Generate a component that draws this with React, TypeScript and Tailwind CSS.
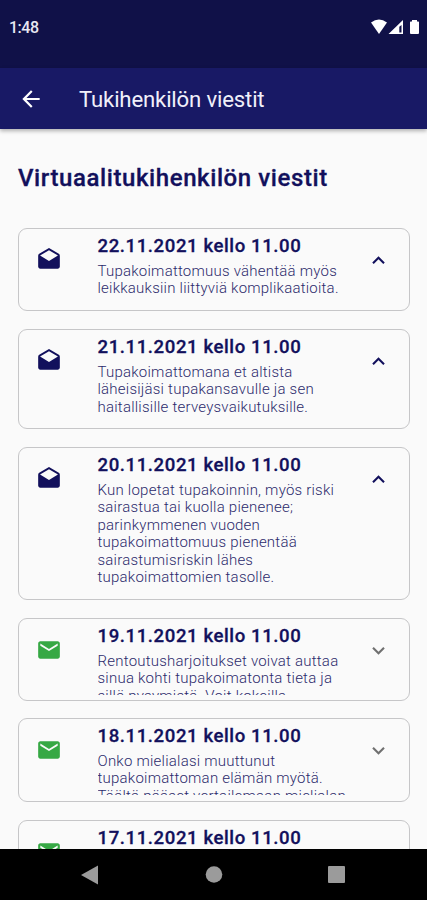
type Message = { date: string; lines: string[]; open: boolean; box: string };

const messages: Message[] = [
  {
    date: '22.11.2021 kello 11.00',
    lines: ['Tupakoimattomuus vähentää myös', 'leikkauksiin liittyviä komplikaatioita.'],
    open: true,
    box: 'h-[83px] mb-[18px]',
  },
  {
    date: '21.11.2021 kello 11.00',
    lines: ['Tupakoimattomana et altista', 'läheisijäsi tupakansavulle ja sen', 'haitallisille terveysvaikutuksille.'],
    open: true,
    box: 'h-[100px] mb-[18px]',
  },
  {
    date: '20.11.2021 kello 11.00',
    lines: [
      'Kun lopetat tupakoinnin, myös riski',
      'sairastua tai kuolla pienenee;',
      'parinkymmenen vuoden',
      'tupakoimattomuus pienentää',
      'sairastumisriskin lähes',
      'tupakoimattomien tasolle.',
    ],
    open: true,
    box: 'h-[153px] mb-[18px]',
  },
  {
    date: '19.11.2021 kello 11.00',
    lines: ['Rentoutusharjoitukset voivat auttaa', 'sinua kohti tupakoimatonta tieta ja', 'sillä pysymistä. Voit kokeilla'],
    open: false,
    box: 'h-[83px] mb-[17px]',
  },
  {
    date: '18.11.2021 kello 11.00',
    lines: ['Onko mielialasi muuttunut', 'tupakoimattoman elämän myötä.', 'Täältä pääset vertailemaan mielialan'],
    open: false,
    box: 'h-[84px] mb-[18px]',
  },
  { date: '17.11.2021 kello 11.00', lines: [], open: false, box: 'h-[84px]' },
];

function Envelope({ open }: { open: boolean }) {
  return open ? (
    <svg viewBox="0 0 24 24" className="size-[26px] fill-[#12105c]">
      <path d="M21.99 8c0-.72-.37-1.35-.94-1.7L12 1 2.95 6.3C2.38 6.65 2 7.28 2 8v10c0 1.1.9 2 2 2h16c1.1 0 2-.9 2-2l-.01-10zM12 13 3.74 7.84 12 3l8.26 4.84L12 13z" />
    </svg>
  ) : (
    <svg viewBox="0 0 24 24" className="size-[26px] fill-[#36a844]">
      <path d="M20 4H4c-1.1 0-1.99.9-1.99 2L2 18c0 1.1.9 2 2 2h16c1.1 0 2-.9 2-2V6c0-1.1-.9-2-2-2zm0 4-8 5-8-5V6l8 5 8-5v2z" />
    </svg>
  );
}

function Chevron({ open }: { open: boolean }) {
  return (
    <svg viewBox="0 0 24 24" className={open ? 'size-[25px] fill-[#12105c]' : 'size-[25px] fill-[#707070]'}>
      <path
        d={
          open
            ? 'M12 8l-6 6 1.41 1.41L12 10.83l4.59 4.58L18 14z'
            : 'M16.59 8.59 12 13.17 7.41 8.59 6 10l6 6 6-6z'
        }
      />
    </svg>
  );
}

function Card({ message }: { message: Message }) {
  return (
    <article className={`flex shrink-0 rounded-[9px] border border-[#c6c6c8] ${message.box}`}>
      <div className="w-[78.500px] shrink-0 pl-[17.400px] pt-[18.400px]">
        <Envelope open={message.open} />
      </div>
      <div className="w-[258px] shrink-0 pt-[4.500px]">
        <h2 className="h-[27px] whitespace-nowrap text-[18.600px] font-medium leading-[25px] tracking-[0.580px] text-[#12105c] [-webkit-text-stroke:0.3px_#12105c]">
          {message.date}
        </h2>
        <div className={message.open ? 'mt-[2px]' : 'mt-[2px] h-[42px] overflow-hidden'}>
          {message.lines.map((line) => (
            <p
              key={line}
              className="h-[17.500px] whitespace-nowrap text-[15px] font-light leading-[17.500px] tracking-[0.230px] text-[#2c2a6c]"
            >
              {line}
            </p>
          ))}
        </div>
      </div>
      <div className="pl-[10.500px] pt-[18.500px]">
        <Chevron open={message.open} />
      </div>
    </article>
  );
}

export default function App() {
  return (
    <div className="flex h-[900px] w-[427px] flex-col overflow-hidden bg-[#fafafa] font-[Roboto,sans-serif]">
      <div className="flex h-[68px] shrink-0 items-start justify-between bg-[#101148] pl-[9px] pr-[7px] pt-[18px] text-white">
        <span className="text-[16px] font-medium leading-[20px] tracking-[-0.500px] text-[#e8e8f2]">1:48</span>
        <svg width="50" height="18" viewBox="0 0 50 18" className="fill-white">
          <path d="M1 4.5Q9 -1.5 17 4.5L9 16z" />
          <path fillRule="evenodd" d="M33 2v14H18.500zM31.500 7v7.500h-2.200V8.800z" />
          <path d="M42 2h5v1.500h1.300q.7 0 .7.800V15q0 1-1 1h-7q-1 0-1-1V4.300q0-.8.700-.8H42z" />
        </svg>
      </div>
      <header className="z-10 flex h-[61px] shrink-0 items-center bg-[#181965] pl-[18px] shadow-[0_2px_4px_rgba(0,0,0,0.3)]">
        <svg viewBox="0 0 24 24" className="size-[26px] fill-white">
          <path d="M20 11H7.830l5.590-5.590L12 4l-8 8 8 8 1.410-1.410L7.830 13H20v-2z" />
        </svg>
        <h1 className="ml-[35px] mt-[2px] whitespace-nowrap text-[22.200px] tracking-[-0.180px] text-[#f0f0fa]">
          Tukihenkilön viestit
        </h1>
      </header>
      <main className="flex h-[720px] shrink-0 flex-col overflow-hidden pl-[18px] pr-[17px]">
        <h2 className="mb-[34px] mt-[33px] h-[32px] shrink-0 whitespace-nowrap text-[24px] font-medium leading-[32px] tracking-[0.590px] text-[#12105c] [-webkit-text-stroke:0.3px_#12105c]">
          Virtuaalitukihenkilön viestit
        </h2>
        {messages.map((message) => (
          <Card key={message.date} message={message} />
        ))}
      </main>
      <nav className="h-[51px] shrink-0 bg-black">
        <svg width="427" height="51" className="fill-[#9b9b9b]">
          <path d="M81 26 98 16.500V35.500z" />
          <circle cx="214" cy="25.500" r="8.300" />
          <rect x="328" y="17" width="17" height="17" rx="1" />
        </svg>
      </nav>
    </div>
  );
}
